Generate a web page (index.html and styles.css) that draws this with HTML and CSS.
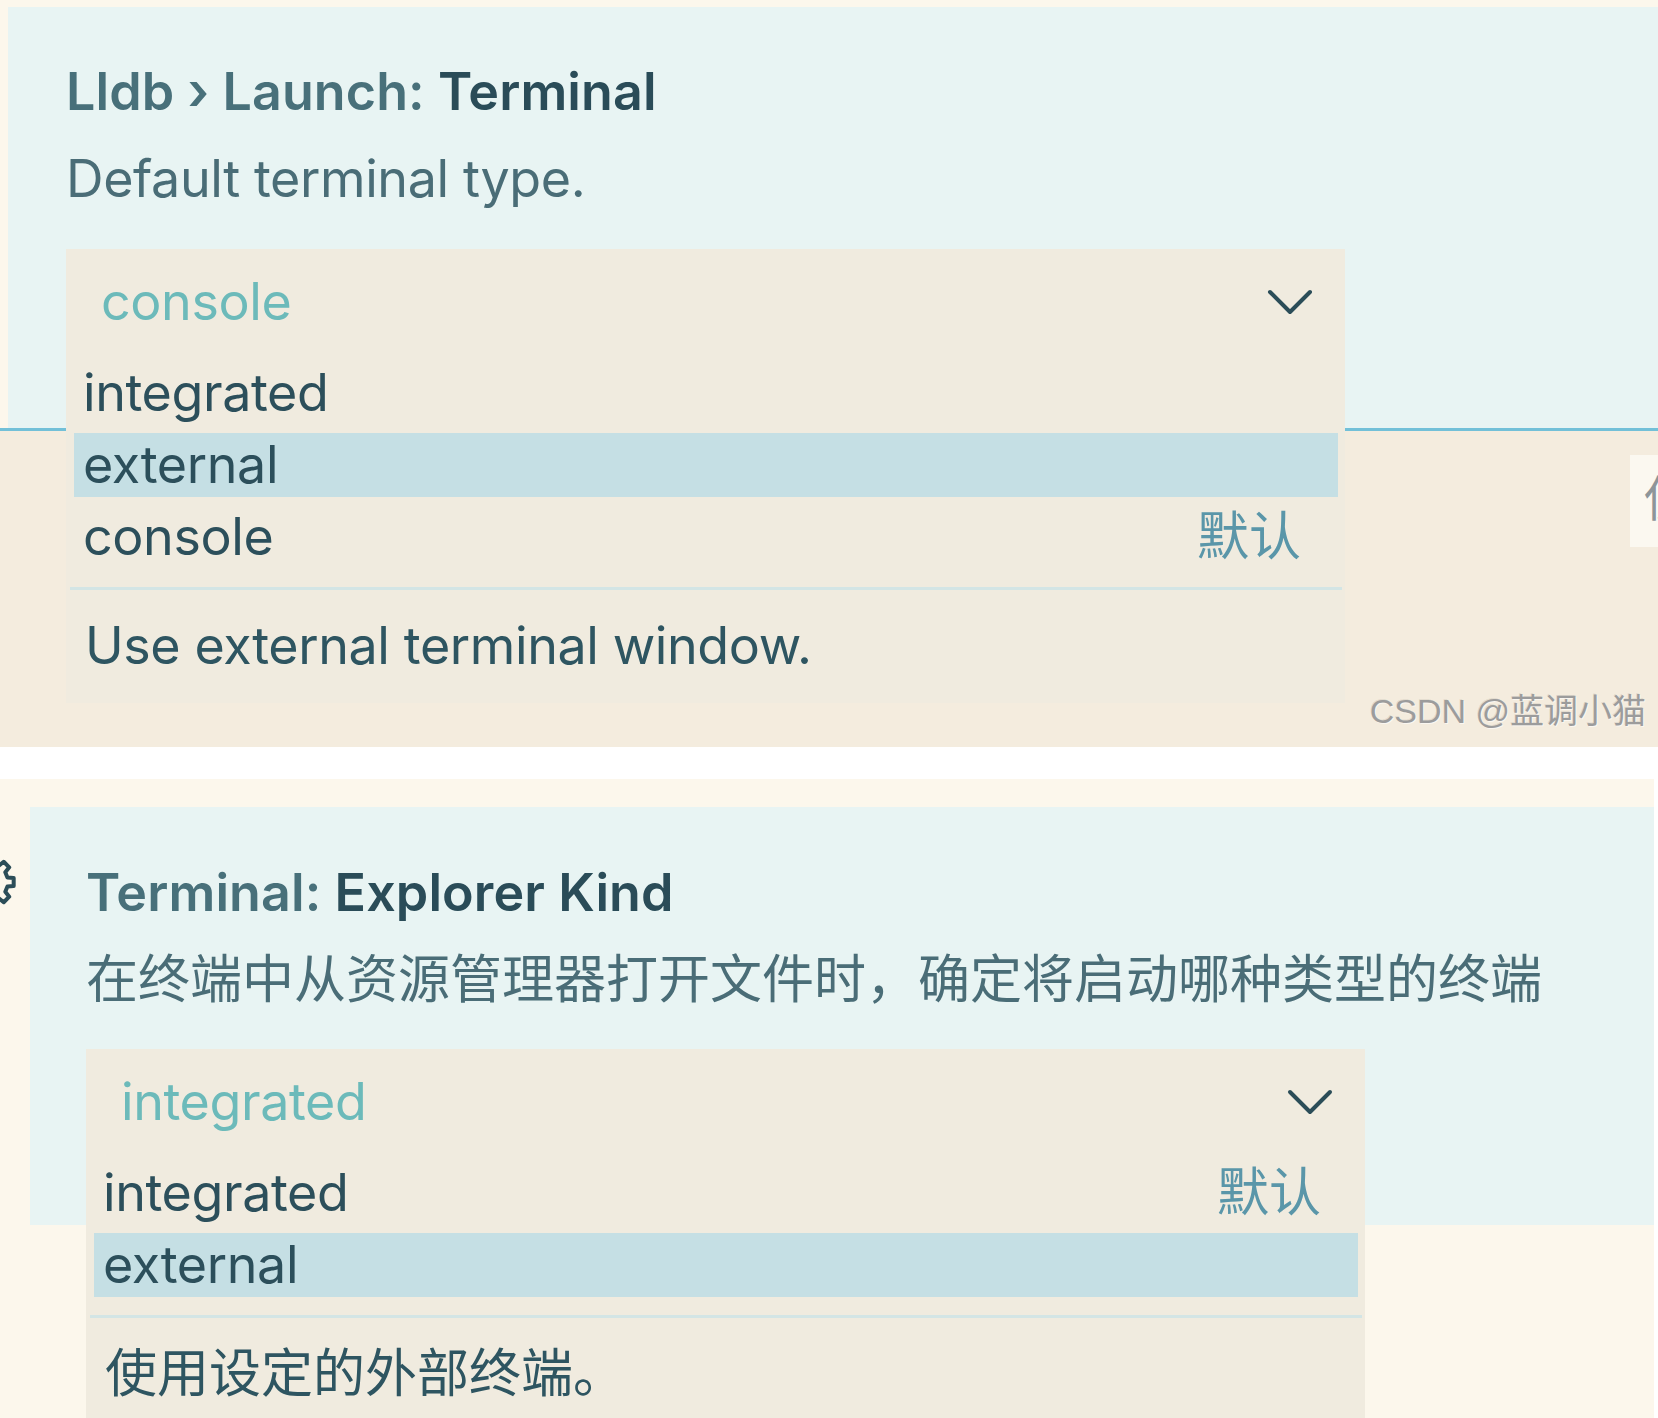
FILE: index.html
```html
<!DOCTYPE html>
<html lang="zh-CN">
<head>
<meta charset="utf-8">
<title>Terminal settings</title>
<link rel="stylesheet" href="styles.css">
</head>
<body>
<section class="shot shot-a">
  <div class="top">
    <div class="panel panel-a">
      <h2 class="title"><span class="cat">Lldb › Launch: </span>Terminal</h2>
      <p class="desc en">Default terminal type.</p>
      <div class="dropdown">
        <div class="select">
          <span class="ph en">console</span>
          <svg class="chev" width="48" height="28" viewBox="0 0 48 28"><polyline points="4,3 24,23 44,3" fill="none" stroke="#2b4d58" stroke-width="4" stroke-linecap="round" stroke-linejoin="round"/></svg>
        </div>
        <div class="list">
          <div class="opt"><div class="opt-in"><span class="en">integrated</span></div></div>
          <div class="opt sel"><div class="opt-in"><span class="en">external</span></div></div>
          <div class="opt"><div class="opt-in"><span class="en">console</span><span class="def">默认</span></div></div>
          <div class="sep"></div>
          <div class="ldesc en">Use external terminal window.</div>
        </div>
      </div>
    </div>
  </div>
  <div class="side"><span>使</span></div>
  <div class="mark">CSDN @蓝调小猫</div>
</section>

<section class="shot shot-b">
  <svg class="gear" width="60" height="60" viewBox="0 0 60 60"><path d="M48.44 25.4 L54.69 26.09 L54.69 33.91 L48.44 34.6 L46.29 39.79 L50.23 44.7 L44.7 50.23 L39.79 46.29 L34.6 48.44 L33.91 54.69 L26.09 54.69 L25.4 48.44 L20.21 46.29 L15.3 50.23 L9.77 44.7 L13.71 39.79 L11.56 34.6 L5.31 33.91 L5.31 26.09 L11.56 25.4 L13.71 20.21 L9.77 15.3 L15.3 9.77 L20.21 13.71 L25.4 11.56 L26.09 5.31 L33.91 5.31 L34.6 11.56 L39.79 13.71 L44.7 9.77 L50.23 15.3 L46.29 20.21 Z" fill="none" stroke="#2b4d58" stroke-width="4" stroke-linejoin="round"/><circle cx="30" cy="30" r="8" fill="none" stroke="#2b4d58" stroke-width="4"/></svg>
  <div class="panel panel-b">
    <h2 class="title"><span class="cat">Terminal: </span>Explorer Kind</h2>
    <p class="desc">在终端中从资源管理器打开文件时，确定将启动哪种类型的终端</p>
    <div class="dropdown">
      <div class="select">
        <span class="ph en">integrated</span>
        <svg class="chev" width="48" height="28" viewBox="0 0 48 28"><polyline points="4,3 24,23 44,3" fill="none" stroke="#2b4d58" stroke-width="4" stroke-linecap="round" stroke-linejoin="round"/></svg>
      </div>
      <div class="list">
        <div class="opt"><div class="opt-in"><span class="en">integrated</span><span class="def">默认</span></div></div>
        <div class="opt sel"><div class="opt-in"><span class="en">external</span></div></div>
        <div class="sep"></div>
        <div class="ldesc">使用设定的外部终端。</div>
      </div>
    </div>
  </div>
</section>
</body>
</html>
```

FILE: styles.css
```css
* { box-sizing: border-box; }
html, body {
  margin: 0;
  padding: 0;
  background: #ffffff;
  overflow: hidden;
}
body {
  font-family: Inter, "Noto Sans CJK SC", sans-serif;
  color: #2c4f5b;
}

.en {
  letter-spacing: -0.4px;
}

.shot {
  position: relative;
  overflow: hidden;
}

.shot-a {
  width: 1658px;
  height: 747px;
  background: #f4ecde;
}

.top {
  background: #fcf7ec;
  padding: 7px 0 0 8px;
  border-bottom: 3px solid #72c0d8;
}

.panel {
  background: #e8f4f3;
}

.panel-a {
  height: 421px;
  padding: 49px 0 0 58px;
}

.shot-b {
  width: 1654px;
  height: 639px;
  margin-top: 32px;
  background: #fcf7ec;
  padding: 28px 0 0 30px;
}

.panel-b {
  height: 418px;
  padding: 50px 0 0 56px;
}

.title {
  margin: 0;
  font-size: 52px;
  line-height: 72px;
  font-weight: 600;
  color: #2a4c58;
  white-space: nowrap;
  letter-spacing: 0.1px;
}
.title .cat {
  color: #48707a;
}

.desc {
  margin: 15px 0 0;
  font-size: 52px;
  line-height: 72px;
  color: #4a6d77;
  white-space: nowrap;
}

.dropdown {
  position: relative;
  width: 1279px;
  height: 108px;
  margin-top: 34px;
  background: #f0ebdf;
}
.panel-b .dropdown { margin-top: 33px; }

.select {
  height: 108px;
  display: flex;
  align-items: flex-start;
  justify-content: space-between;
  padding: 0 31px 0 35px;
}
.ph {
  font-size: 52px;
  line-height: 106px;
  color: #6cbaba;
}
.chev {
  margin-top: 40px;
}

.list {
  position: absolute;
  top: 108px;
  left: 0;
  width: 1279px;
  background: #f0ebdf;
  padding-bottom: 21px;
}

.opt {
  height: 72px;
  padding: 4px 7px 4px 8px;
}
.opt-in {
  height: 64px;
  display: flex;
  align-items: center;
  justify-content: space-between;
  padding: 0 37px 0 9px;
  font-size: 52px;
  line-height: 64px;
  color: #2c4f5b;
}
.opt.sel .opt-in {
  background: #c5dfe4;
}
.def {
  color: #5a96a9;
}

.sep {
  height: 3px;
  margin: 14px 3px 0 4px;
  background: #d3e5e5;
}

.ldesc {
  padding: 20px 0 0 19px;
  font-size: 52px;
  line-height: 72px;
  color: #2e5561;
  white-space: nowrap;
}

.side {
  position: absolute;
  left: 1630px;
  top: 455px;
  width: 28px;
  height: 92px;
  background: #fbf8f0;
  overflow: hidden;
  padding: 18px 0 0 14px;
}
.side span {
  display: block;
  font-size: 48px;
  line-height: 52px;
  color: #8e9599;
  white-space: nowrap;
}

.mark {
  position: absolute;
  right: 12px;
  top: 691px;
  font-size: 34px;
  line-height: 40px;
  color: #9c9c9c;
  text-shadow: 1px 1px 0 rgba(255,255,255,0.6), -1px -1px 0 rgba(0,0,0,0.08);
  white-space: nowrap;
  font-family: "Liberation Sans", "Noto Sans CJK SC", sans-serif;
}

.gear {
  position: absolute;
  left: -41px;
  top: 73px;
}
```
